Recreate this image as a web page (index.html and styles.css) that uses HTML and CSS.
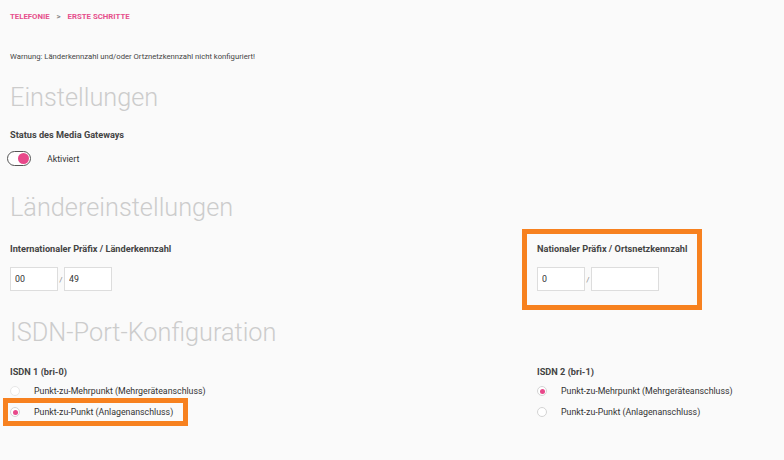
FILE: index.html
```html
<!DOCTYPE html>
<html lang="de">
<head>
    <meta charset="UTF-8">
    <meta name="viewport" content="width=device-width, initial-scale=1.0">
    <title>Erste Schritte</title>
    <link rel="stylesheet" href="styles.css">
</head>
<body>
    <div class="breadcrumb">
        <span class="crumb">Telefonie</span>
        <span class="sep">&gt;</span>
        <span class="crumb">Erste Schritte</span>
    </div>

    <p class="warning">Warnung: Länderkennzahl und/oder Ortznetzkennzahl nicht konfiguriert!</p>

    <h2 class="title title-first">Einstellungen</h2>
    <div class="label label-status">Status des Media Gateways</div>
    <div class="toggle-row">
        <span class="toggle"><span class="knob"></span></span>
        <span class="toggle-text">Aktiviert</span>
    </div>

    <h2 class="title">Ländereinstellungen</h2>
    <div class="columns">
        <div class="group">
            <div class="label">Internationaler Präfix / Länderkennzahl</div>
            <div class="inputs">
                <input class="field" type="text" value="00">
                <span class="slash">/</span>
                <input class="field" type="text" value="49">
            </div>
        </div>
        <div class="group highlight">
            <div class="label">Nationaler Präfix / Ortsnetzkennzahl</div>
            <div class="inputs">
                <input class="field" type="text" value="0">
                <span class="slash">/</span>
                <input class="field field-wide" type="text" value="">
            </div>
        </div>
    </div>

    <h2 class="title">ISDN-Port-Konfiguration</h2>
    <div class="columns columns-isdn">
        <div class="group">
            <div class="label">ISDN 1 (bri-0)</div>
            <div class="radio-row">
                <span class="radio radio-faint"></span>
                <span>Punkt-zu-Mehrpunkt (Mehrgeräteanschluss)</span>
            </div>
            <div class="radio-row radio-marked">
                <span class="radio checked"></span>
                <span>Punkt-zu-Punkt (Anlagenanschluss)</span>
            </div>
        </div>
        <div class="group">
            <div class="label">ISDN 2 (bri-1)</div>
            <div class="radio-row">
                <span class="radio checked"></span>
                <span>Punkt-zu-Mehrpunkt (Mehrgeräteanschluss)</span>
            </div>
            <div class="radio-row">
                <span class="radio"></span>
                <span>Punkt-zu-Punkt (Anlagenanschluss)</span>
            </div>
        </div>
    </div>
</body>
</html>
```

FILE: styles.css
```css
body {
    margin: 0;
    padding: 12px 10px 30px;
    background: #fafafa;
    font-family: Roboto, "Liberation Sans", sans-serif;
    color: #333;
}

.breadcrumb {
    font-size: 7.8px;
    line-height: 10px;
    font-weight: bold;
    text-transform: uppercase;
}

.crumb {
    color: #e6508c;
}

.sep {
    color: #888;
    margin: 0 5px;
}

.warning {
    margin: 30px 0 0;
    font-size: 7.7px;
    line-height: 10px;
    color: #444;
}

.title {
    margin: 27px 0 0;
    font-size: 25.3px;
    line-height: 30px;
    font-weight: 300;
    color: #ccc;
}

.title-first {
    margin-top: 21px;
}

.label {
    font-size: 9.2px;
    line-height: 10px;
    font-weight: bold;
    color: #444;
    white-space: nowrap;
}

.label-status {
    margin-top: 17px;
}

.toggle-row {
    display: flex;
    align-items: center;
    margin: 11px 0 0 -3px;
    font-size: 8.8px;
}

.toggle {
    width: 24px;
    height: 15px;
    box-sizing: border-box;
    border: 1.5px solid #555;
    border-radius: 8px;
    background: #fff;
    display: flex;
    align-items: center;
    justify-content: flex-end;
    padding-right: 1px;
}

.knob {
    width: 11px;
    height: 11px;
    border-radius: 50%;
    background: #e8488a;
}

.toggle-text {
    margin-left: 16px;
}

.columns {
    display: grid;
    grid-template-columns: 527px 1fr;
    align-items: start;
    margin-top: 21px;
}

.columns-isdn {
    margin-top: 19px;
}

.inputs {
    display: flex;
    align-items: center;
    margin-top: 13px;
}

.field {
    width: 48px;
    height: 24px;
    box-sizing: border-box;
    border: 1px solid #ddd;
    background: #fff;
    padding: 0 4px;
    font-family: inherit;
    font-size: 8.8px;
    color: #333;
    outline: none;
}

.field-wide {
    width: 68px;
}

.slash {
    width: 6px;
    text-align: center;
    font-size: 8px;
    color: #888;
}

.highlight {
    width: 150px;
    padding-bottom: 4px;
    margin-bottom: -4px;
    outline: 5px solid #f7811f;
    outline-offset: 10px;
}

.radio-row {
    display: flex;
    align-items: center;
    width: max-content;
    height: 14px;
    margin-top: 7px;
    padding-right: 8px;
    font-size: 8.8px;
}

.label + .radio-row {
    margin-top: 7px;
}

.radio {
    width: 10px;
    height: 10px;
    box-sizing: border-box;
    border: 1px solid #d4d4d4;
    border-radius: 50%;
    background: #fff;
    margin-right: 14px;
    display: flex;
    align-items: center;
    justify-content: center;
}

.radio-faint {
    border-color: #e8e8e8;
}

.checked::after {
    content: "";
    width: 5px;
    height: 5px;
    border-radius: 50%;
    background: #e8488a;
}

.radio-marked {
    outline: 5px solid #f7811f;
    outline-offset: 2px;
}
```
